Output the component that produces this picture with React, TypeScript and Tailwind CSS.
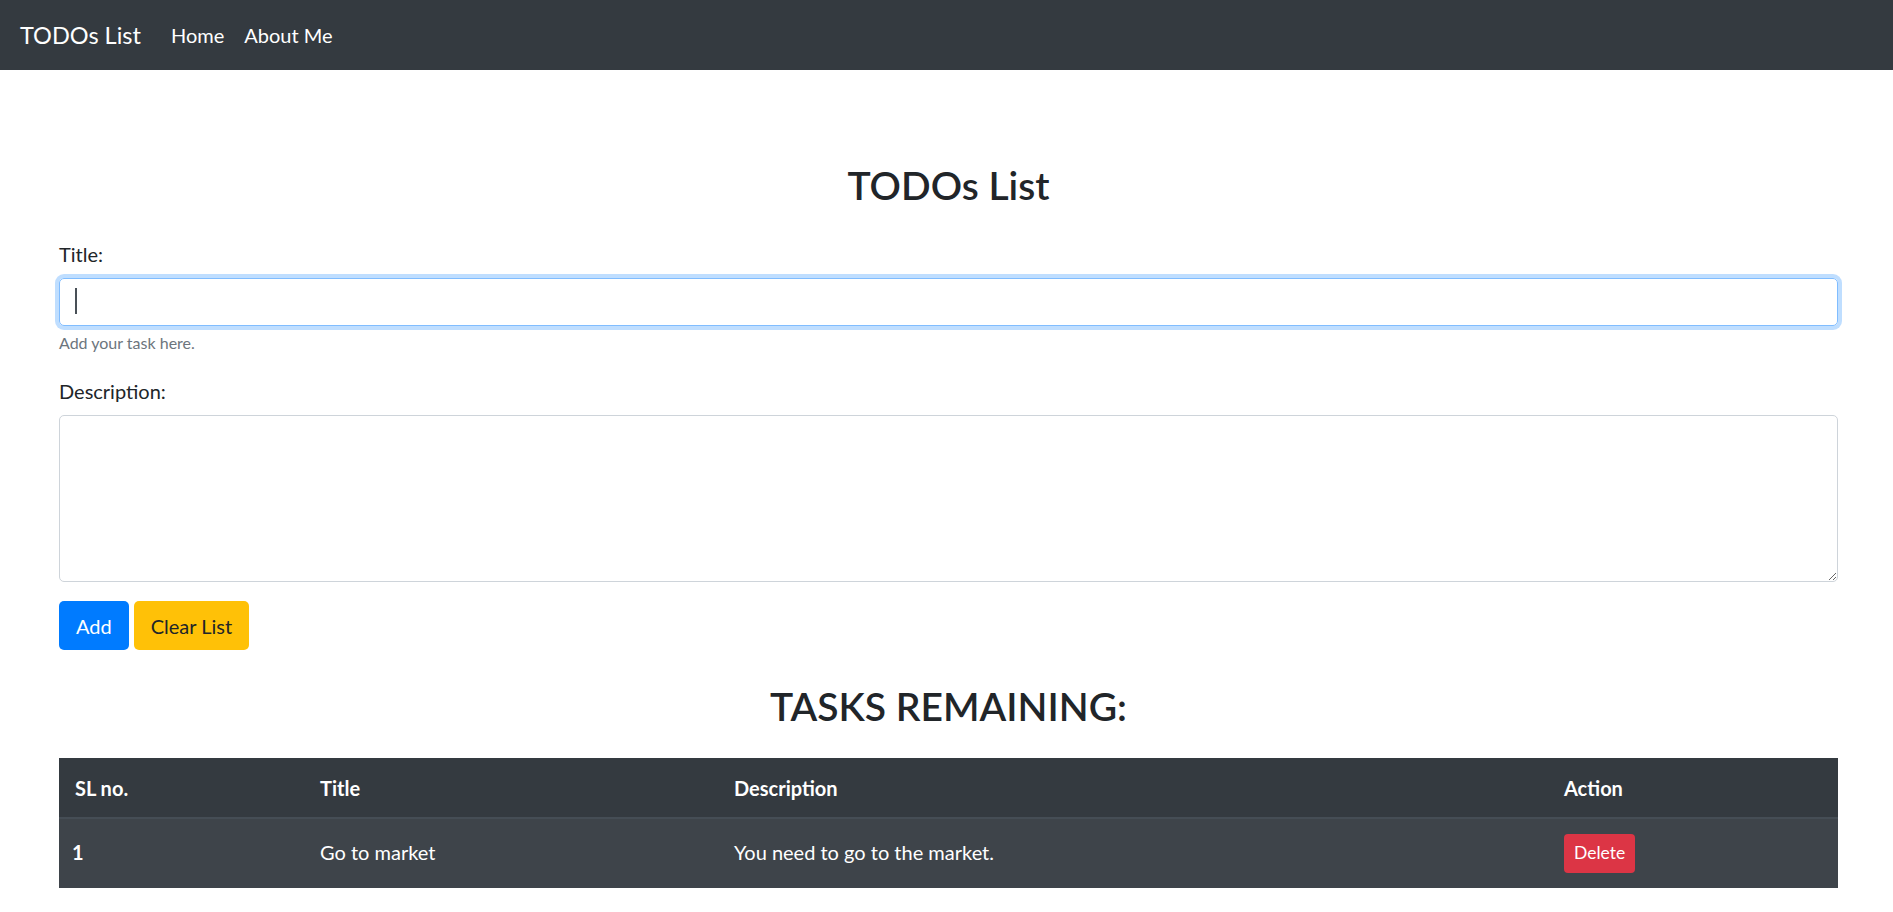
import { useState } from 'react';

type Todo = {
  sno: number;
  title: string;
  desc: string;
};

const App = () => {
  const [todos, setTodos] = useState<Todo[]>([
    { sno: 1, title: 'Go to market', desc: 'You need to go to the market.' },
  ]);
  const [title, setTitle] = useState<string>('');
  const [desc, setDesc] = useState<string>('');

  const handleAdd = () => {
    if (!title) return;
    setTodos([...todos, { sno: todos.length + 1, title, desc }]);
    setTitle('');
    setDesc('');
  };

  const handleDelete = (todo: Todo) => {
    setTodos(todos.filter(t => t.sno !== todo.sno));
  };

  return (
    <div className="min-h-screen bg-white font-['Lato','Liberation_Sans',sans-serif] text-[#212529]">
      <nav className="h-[70px] bg-[#343a40] flex items-center px-5">
        <a href="#" className="text-[23.5px] leading-[37px] text-white mr-5">
          TODOs List
        </a>
        <a href="#" className="px-[10px] text-[20px] leading-[30px] text-white">
          Home
        </a>
        <a href="#" className="px-[10px] text-[20px] leading-[30px] text-white">
          About Me
        </a>
      </nav>

      <div className="ml-[59px] mr-[55px] pt-[91px]">
        <h2 className="text-center text-[39px] leading-[48px] font-semibold">
          TODOs List
        </h2>

        <form className="mt-[30px]" onSubmit={e => e.preventDefault()}>
          <label className="block text-[20px] leading-[30px] mb-[9px]">
            Title:
          </label>
          <div className="relative">
            <input
              value={title}
              onChange={e => setTitle(e.target.value)}
              className="block w-full h-[48px] rounded-[5px] border border-[#80bdff] shadow-[0_0_0_4px_rgba(0,123,255,0.25)] px-[15px] text-[20px] outline-none"
            />
            {!title && (
              <span className="absolute left-[16px] top-[10px] h-[26px] w-[2px] bg-[#495057]" />
            )}
          </div>
          <small className="block mt-[5px] text-[16px] leading-[24px] text-[#6c757d]">
            Add your task here.
          </small>

          <label className="block mt-[21px] text-[20px] leading-[30px] mb-[9px]">
            Description:
          </label>
          <textarea
            value={desc}
            onChange={e => setDesc(e.target.value)}
            className="block w-full h-[167px] rounded-[5px] border border-[#ced4da] px-[15px] py-[8px] text-[20px] outline-none"
          />

          <div className="mt-[19px] flex gap-[5px]">
            <button
              type="button"
              onClick={handleAdd}
              className="h-[49px] px-[17px] rounded-[5px] bg-[#007bff] text-white text-[20px]"
            >
              Add
            </button>
            <button
              type="button"
              onClick={() => setTodos([])}
              className="h-[49px] px-[17px] rounded-[5px] bg-[#ffc107] text-[#212529] text-[20px]"
            >
              Clear List
            </button>
          </div>
        </form>

        <h2 className="mt-[32px] text-center text-[39px] leading-[48px] font-semibold">
          TASKS REMAINING:
        </h2>

        <div className="mt-[28px] text-white text-[20px]">
          <div className="grid grid-cols-[246px_414px_830px_1fr] h-[61px] items-center bg-[#343a40] border-b-2 border-[#454d55] font-bold">
            <div className="pl-[16px]">SL no.</div>
            <div className="pl-[15px]">Title</div>
            <div className="pl-[15px]">Description</div>
            <div className="pl-[15px]">Action</div>
          </div>
          {todos.map(todo => (
            <div
              key={todo.sno}
              className="grid grid-cols-[246px_414px_830px_1fr] h-[69px] items-center bg-[#3e444a]"
            >
              <div className="pl-[13px] pb-[3px] font-bold">{todo.sno}</div>
              <div className="pl-[15px] pb-[3px]">{todo.title}</div>
              <div className="pl-[15px] pb-[3px]">{todo.desc}</div>
              <div className="pl-[15px]">
                <button
                  onClick={() => handleDelete(todo)}
                  className="h-[39px] px-[10px] rounded-[4px] bg-[#dc3545] text-white text-[17.5px]"
                >
                  Delete
                </button>
              </div>
            </div>
          ))}
        </div>
      </div>
    </div>
  );
};

export default App;
